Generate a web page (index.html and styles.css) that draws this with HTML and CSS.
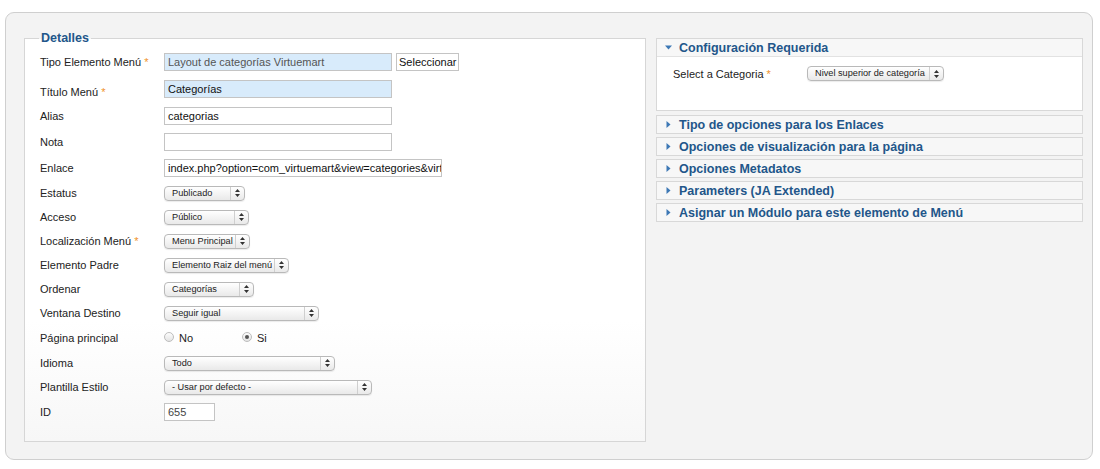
FILE: index.html
```html
<!DOCTYPE html>
<html lang="es">
<head>
<meta charset="utf-8">
<link rel="stylesheet" href="styles.css">
</head>
<body>
<div class="outer">
  <fieldset class="details">
    <legend>Detalles</legend>
    <div class="row r26">
      <div class="label">Tipo Elemento Menú <span class="req">*</span></div>
      <div class="input blue ro w228">Layout de categorías Virtuemart</div>
      <div class="btn">Seleccionar</div>
    </div>
    <div class="row r28">
      <div class="label lower">Título Menú <span class="req">*</span></div>
      <div class="input blue w228">Categorías</div>
    </div>
    <div class="row r26">
      <div class="label">Alias</div>
      <div class="input w228">categorias</div>
    </div>
    <div class="row r26">
      <div class="label">Nota</div>
      <div class="input w228"></div>
    </div>
    <div class="row r26">
      <div class="label">Enlace</div>
      <div class="input w278">index.php?option=com_virtuemart&amp;view=categories&amp;virtuemart_category_id=0</div>
    </div>
    <div class="row r24">
      <div class="label">Estatus</div>
      <div class="select w81"><span class="stext">Publicado</span><span class="sarrow"><svg width="5" height="8" viewBox="0 0 5 8"><path d="M2.5 0 L5 3 H0 Z M0 5 H5 L2.5 8 Z" fill="#333"/></svg></span></div>
    </div>
    <div class="row r24">
      <div class="label">Acceso</div>
      <div class="select w85"><span class="stext">Público</span><span class="sarrow"><svg width="5" height="8" viewBox="0 0 5 8"><path d="M2.5 0 L5 3 H0 Z M0 5 H5 L2.5 8 Z" fill="#333"/></svg></span></div>
    </div>
    <div class="row r24">
      <div class="label">Localización Menú <span class="req">*</span></div>
      <div class="select w86"><span class="stext">Menu Principal</span><span class="sarrow"><svg width="5" height="8" viewBox="0 0 5 8"><path d="M2.5 0 L5 3 H0 Z M0 5 H5 L2.5 8 Z" fill="#333"/></svg></span></div>
    </div>
    <div class="row r24">
      <div class="label">Elemento Padre</div>
      <div class="select w125"><span class="stext">Elemento Raiz del menú</span><span class="sarrow"><svg width="5" height="8" viewBox="0 0 5 8"><path d="M2.5 0 L5 3 H0 Z M0 5 H5 L2.5 8 Z" fill="#333"/></svg></span></div>
    </div>
    <div class="row r24">
      <div class="label">Ordenar</div>
      <div class="select w90"><span class="stext">Categorías</span><span class="sarrow"><svg width="5" height="8" viewBox="0 0 5 8"><path d="M2.5 0 L5 3 H0 Z M0 5 H5 L2.5 8 Z" fill="#333"/></svg></span></div>
    </div>
    <div class="row r24">
      <div class="label">Ventana Destino</div>
      <div class="select w155"><span class="stext">Seguir igual</span><span class="sarrow"><svg width="5" height="8" viewBox="0 0 5 8"><path d="M2.5 0 L5 3 H0 Z M0 5 H5 L2.5 8 Z" fill="#333"/></svg></span></div>
    </div>
    <div class="row r26">
      <div class="label">Página principal</div>
      <div class="radios">
        <span class="radio-item no"><span class="radio"></span>No</span>
        <span class="radio-item"><span class="radio checked"></span>Si</span>
      </div>
    </div>
    <div class="row r24">
      <div class="label">Idioma</div>
      <div class="select w171"><span class="stext">Todo</span><span class="sarrow"><svg width="5" height="8" viewBox="0 0 5 8"><path d="M2.5 0 L5 3 H0 Z M0 5 H5 L2.5 8 Z" fill="#333"/></svg></span></div>
    </div>
    <div class="row r24">
      <div class="label">Plantilla Estilo</div>
      <div class="select w208"><span class="stext">- Usar por defecto -</span><span class="sarrow"><svg width="5" height="8" viewBox="0 0 5 8"><path d="M2.5 0 L5 3 H0 Z M0 5 H5 L2.5 8 Z" fill="#333"/></svg></span></div>
    </div>
    <div class="row r25">
      <div class="label">ID</div>
      <div class="input w50 idv">655</div>
    </div>
  </fieldset>

  <div class="side">
    <div class="panel open">
      <div class="phead"><svg class="tri" width="7" height="7" viewBox="0 0 7 7"><path d="M0 1.5 H7 L3.5 5.5 Z" fill="#3d78b5"/></svg>Configuración Requerida</div>
      <div class="pbody">
        <div class="plabel">Select a Categoria <span class="req">*</span></div>
        <div class="select w137"><span class="stext">Nivel superior de categoría</span><span class="sarrow"><svg width="5" height="8" viewBox="0 0 5 8"><path d="M2.5 0 L5 3 H0 Z M0 5 H5 L2.5 8 Z" fill="#333"/></svg></span></div>
      </div>
    </div>
    <div class="panel"><div class="phead"><svg class="tri" width="7" height="7" viewBox="0 0 7 7"><path d="M1.5 0 L5.5 3.5 L1.5 7 Z" fill="#3d78b5"/></svg>Tipo de opciones para los Enlaces</div></div>
    <div class="panel"><div class="phead"><svg class="tri" width="7" height="7" viewBox="0 0 7 7"><path d="M1.5 0 L5.5 3.5 L1.5 7 Z" fill="#3d78b5"/></svg>Opciones de visualización para la página</div></div>
    <div class="panel"><div class="phead"><svg class="tri" width="7" height="7" viewBox="0 0 7 7"><path d="M1.5 0 L5.5 3.5 L1.5 7 Z" fill="#3d78b5"/></svg>Opciones Metadatos</div></div>
    <div class="panel"><div class="phead"><svg class="tri" width="7" height="7" viewBox="0 0 7 7"><path d="M1.5 0 L5.5 3.5 L1.5 7 Z" fill="#3d78b5"/></svg>Parameters (JA Extended)</div></div>
    <div class="panel"><div class="phead"><svg class="tri" width="7" height="7" viewBox="0 0 7 7"><path d="M1.5 0 L5.5 3.5 L1.5 7 Z" fill="#3d78b5"/></svg>Asignar un Módulo para este elemento de Menú</div></div>
  </div>
</div>
</body>
</html>
```

FILE: styles.css
```css
html, body {
  margin: 0;
  padding: 0;
  background: #fff;
}
body {
  font-family: "Liberation Sans", Arial, sans-serif;
  font-size: 11px;
  color: #222;
}
.outer {
  margin: 12px 0 0 5px;
  width: 1086px;
  height: 446px;
  border: 1px solid #cfcfcf;
  border-radius: 9px;
  background: #f3f3f3;
  box-sizing: content-box;
  display: flex;
  align-items: flex-start;
  padding: 0;
}
.details {
  margin: 18px 0 0 18px;
  width: 605px;
  height: 405px;
  padding: 4px 0 0 15px;
  border: 1px solid #d6d6d6;
  background: linear-gradient(#ffffff 70%, #f7f7f7);
  box-sizing: content-box;
  min-width: 0;
  flex: none;
}
.details legend {
  padding: 0 2px;
  margin-left: -1px;
  font-size: 12.5px;
  font-weight: bold;
  color: #22568a;
  line-height: 14px;
}
.row {
  display: flex;
  align-items: center;
}
.r24 { height: 24px; }
.r25 { height: 25px; }
.r26 { height: 26px; }
.r28 { height: 28px; }
.label {
  width: 124px;
  flex: none;
  color: #222;
}
.label.lower { padding-top: 5px; }
.req { color: #f0922d; }
.input {
  height: 18px;
  box-sizing: border-box;
  border: 1px solid #c4c4c4;
  background: #fff;
  padding: 0 3px;
  line-height: 16px;
  font-size: 11px;
  color: #111;
  white-space: nowrap;
  overflow: hidden;
}
.input.blue { background: #d8ebfb; }
.input.ro { color: #555; }
.input.idv { color: #444; }
.w228 { width: 228px; }
.w278 { width: 278px; }
.w50 { width: 51px; }
.btn {
  margin-left: 4px;
  height: 18px;
  box-sizing: border-box;
  border: 1px solid #c4c4c4;
  background: #fff;
  padding: 0 2px;
  line-height: 16px;
  color: #111;
}
.select {
  height: 15px;
  box-sizing: border-box;
  border: 1px solid #b9b9b9;
  border-radius: 4px;
  background: linear-gradient(#ffffff, #e9e9e9);
  box-shadow: 0 1px 1px rgba(0,0,0,0.08);
  display: flex;
  align-items: stretch;
  font-size: 9.2px;
  line-height: 13px;
  color: #222;
}
.stext {
  flex: 1;
  padding-left: 7px;
  white-space: nowrap;
  overflow: hidden;
}
.sarrow {
  width: 13px;
  flex: none;
  border-left: 1px solid #cfcfcf;
  display: flex;
  align-items: center;
  justify-content: center;
}
.w81 { width: 81px; }
.w85 { width: 85px; }
.w86 { width: 86px; }
.w90 { width: 90px; }
.w125 { width: 125px; }
.w137 { width: 137px; }
.w155 { width: 155px; }
.w171 { width: 171px; }
.w208 { width: 208px; }
.radios {
  display: flex;
  align-items: center;
}
.radio-item {
  display: inline-flex;
  align-items: center;
  gap: 5px;
}
.radio-item.no { width: 78px; }
.radio {
  width: 10px;
  height: 10px;
  box-sizing: border-box;
  border: 1px solid #bdbdbd;
  border-radius: 50%;
  background: linear-gradient(#fdfdfd, #e4e4e4);
  display: inline-flex;
  align-items: center;
  justify-content: center;
  margin-top: -3px;
}
.radio.checked::after {
  content: "";
  width: 4px;
  height: 4px;
  border-radius: 50%;
  background: #555;
}
.side {
  margin: 25px 0 0 10px;
  width: 427px;
  flex: none;
  display: flex;
  flex-direction: column;
  gap: 3px;
}
.panel {
  border: 1px solid #d8d8d8;
  background: #f7f7f7;
}
.panel.open { margin-bottom: 1px; }
.phead {
  height: 17px;
  display: flex;
  align-items: center;
  padding-left: 8px;
  font-weight: bold;
  font-size: 12.5px;
  color: #22568a;
}
.tri { margin-right: 7px; }
.panel.open .phead { border-bottom: 1px solid #e2e2e2; }
.pbody {
  background: #fff;
  height: 53px;
  display: flex;
  align-items: flex-start;
  padding: 9px 0 0 16px;
  box-sizing: border-box;
}
.plabel {
  width: 134px;
  padding-top: 2px;
}
```
